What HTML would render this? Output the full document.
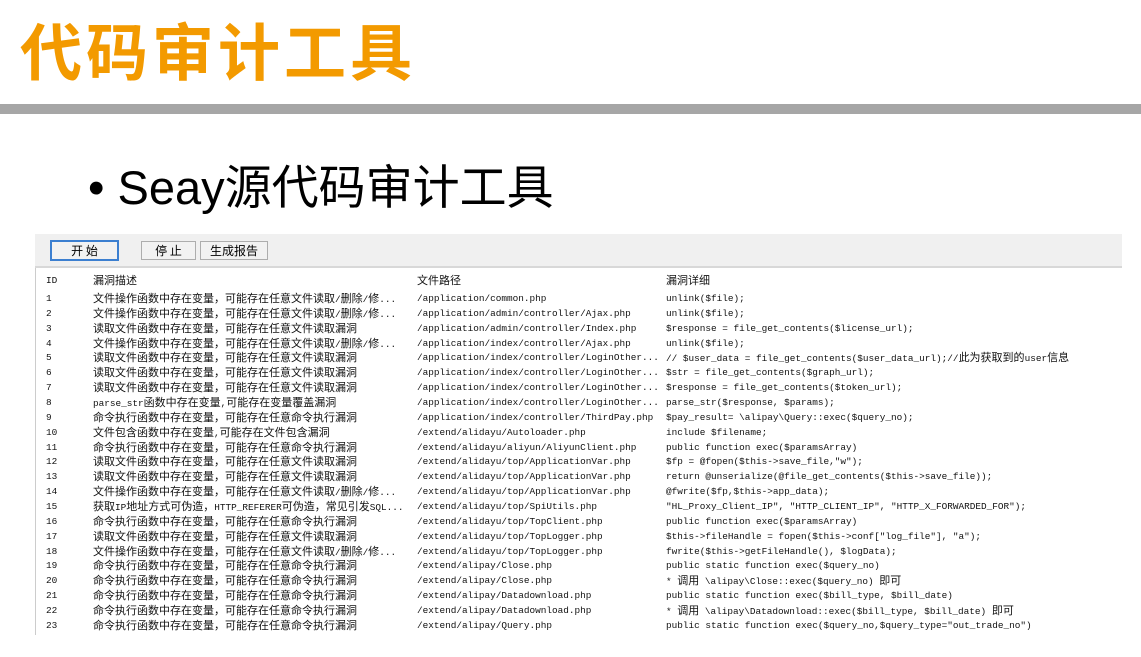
<!DOCTYPE html>
<html><head><meta charset="utf-8"><style>
body{margin:0;width:1141px;height:657px;background:#fff;position:relative;overflow:hidden;font-family:"Liberation Sans","Noto Sans CJK SC",sans-serif}
.t{position:absolute;left:20px;top:8px;font-size:62px;font-weight:bold;color:#f39a00;letter-spacing:4px;line-height:80px;font-family:"Noto Sans CJK SC",sans-serif}
.bar{position:absolute;left:0;top:104px;width:1141px;height:10px;background:#a6a6a6}
.b{position:absolute;left:88px;top:157px;font-size:47px;line-height:62px;color:#000;font-family:"Liberation Sans","Noto Sans CJK SC",sans-serif}
.tb{position:absolute;left:35px;top:234px;width:1087px;height:32px;background:#f0f0f0;border-bottom:2px solid #d8d8d8}
.btn{position:absolute;top:7px;height:17px;border:1px solid #adadad;background:#f2f2f2;font-size:12px;line-height:17px;text-align:center;font-family:"Noto Sans CJK SC",sans-serif}
.tbl{position:absolute;left:35px;top:268px;width:1087px;height:367px;border-left:1px solid #ccc}
.r{position:absolute;left:0;height:15px;line-height:15px;font-family:"Liberation Mono","Noto Serif CJK SC",monospace;font-size:9.4px;color:#111;white-space:nowrap}
.r span{position:absolute}
.c{font-size:11px;font-family:"Noto Sans CJK SC",sans-serif}
</style></head><body>
<div class="t">代码审计工具</div>
<div class="bar"></div>
<div class="b">• Seay源代码审计工具</div>
<div class="tb">
<div class="btn" style="left:15px;width:65px;border:2px solid #3c7fd0;top:6px">开 始</div>
<div class="btn" style="left:106px;width:53px">停 止</div>
<div class="btn" style="left:165px;width:66px">生成报告</div>
</div>
<div class="tbl" id="tb"></div>
<script>
var d=[
["ID","漏洞描述","文件路径","漏洞详细"],
["1","文件操作函数中存在变量，可能存在任意文件读取/删除/修...","/application/common.php","unlink($file);"],
["2","文件操作函数中存在变量，可能存在任意文件读取/删除/修...","/application/admin/controller/Ajax.php","unlink($file);"],
["3","读取文件函数中存在变量，可能存在任意文件读取漏洞","/application/admin/controller/Index.php","$response = file_get_contents($license_url);"],
["4","文件操作函数中存在变量，可能存在任意文件读取/删除/修...","/application/index/controller/Ajax.php","unlink($file);"],
["5","读取文件函数中存在变量，可能存在任意文件读取漏洞","/application/index/controller/LoginOther...","//    $user_data = file_get_contents($user_data_url);//此为获取到的user信息"],
["6","读取文件函数中存在变量，可能存在任意文件读取漏洞","/application/index/controller/LoginOther...","$str = file_get_contents($graph_url);"],
["7","读取文件函数中存在变量，可能存在任意文件读取漏洞","/application/index/controller/LoginOther...","$response = file_get_contents($token_url);"],
["8","parse_str函数中存在变量,可能存在变量覆盖漏洞","/application/index/controller/LoginOther...","parse_str($response, $params);"],
["9","命令执行函数中存在变量，可能存在任意命令执行漏洞","/application/index/controller/ThirdPay.php","$pay_result= \\alipay\\Query::exec($query_no);"],
["10","文件包含函数中存在变量,可能存在文件包含漏洞","/extend/alidayu/Autoloader.php","include $filename;"],
["11","命令执行函数中存在变量，可能存在任意命令执行漏洞","/extend/alidayu/aliyun/AliyunClient.php","public function exec($paramsArray)"],
["12","读取文件函数中存在变量，可能存在任意文件读取漏洞","/extend/alidayu/top/ApplicationVar.php","$fp = @fopen($this->save_file,\"w\");"],
["13","读取文件函数中存在变量，可能存在任意文件读取漏洞","/extend/alidayu/top/ApplicationVar.php","return @unserialize(@file_get_contents($this->save_file));"],
["14","文件操作函数中存在变量，可能存在任意文件读取/删除/修...","/extend/alidayu/top/ApplicationVar.php","@fwrite($fp,$this->app_data);"],
["15","获取IP地址方式可伪造，HTTP_REFERER可伪造，常见引发SQL...","/extend/alidayu/top/SpiUtils.php","\"HL_Proxy_Client_IP\", \"HTTP_CLIENT_IP\", \"HTTP_X_FORWARDED_FOR\");"],
["16","命令执行函数中存在变量，可能存在任意命令执行漏洞","/extend/alidayu/top/TopClient.php","public function exec($paramsArray)"],
["17","读取文件函数中存在变量，可能存在任意文件读取漏洞","/extend/alidayu/top/TopLogger.php","$this->fileHandle = fopen($this->conf[\"log_file\"], \"a\");"],
["18","文件操作函数中存在变量，可能存在任意文件读取/删除/修...","/extend/alidayu/top/TopLogger.php","fwrite($this->getFileHandle(), $logData);"],
["19","命令执行函数中存在变量，可能存在任意命令执行漏洞","/extend/alipay/Close.php","public static function exec($query_no)"],
["20","命令执行函数中存在变量，可能存在任意命令执行漏洞","/extend/alipay/Close.php","* 调用 \\alipay\\Close::exec($query_no) 即可"],
["21","命令执行函数中存在变量，可能存在任意命令执行漏洞","/extend/alipay/Datadownload.php","public static function exec($bill_type, $bill_date)"],
["22","命令执行函数中存在变量，可能存在任意命令执行漏洞","/extend/alipay/Datadownload.php","* 调用 \\alipay\\Datadownload::exec($bill_type, $bill_date) 即可"],
["23","命令执行函数中存在变量，可能存在任意命令执行漏洞","/extend/alipay/Query.php","public static function exec($query_no,$query_type=\"out_trade_no\")"]];
var h="";function e(s){return s.replace(/&/g,"&amp;").replace(/</g,"&lt;").replace(/>/g,"&gt;").replace(/([\u3000-\u9fff\uff00-\uffef]+)/g,'<b class="c" style="font-weight:normal">$1</b>')}
d.forEach(function(r,i){var y=(i==0?5:23+(i-1)*14.86);h+='<div class="r" style="top:'+y+'px"><span style="left:10px">'+e(r[0])+'</span><span style="left:57px">'+e(r[1])+'</span><span style="left:381px">'+e(r[2])+'</span><span style="left:630px">'+e(r[3])+'</span></div>'});
document.getElementById("tb").innerHTML=h;
</script>
</body></html>
